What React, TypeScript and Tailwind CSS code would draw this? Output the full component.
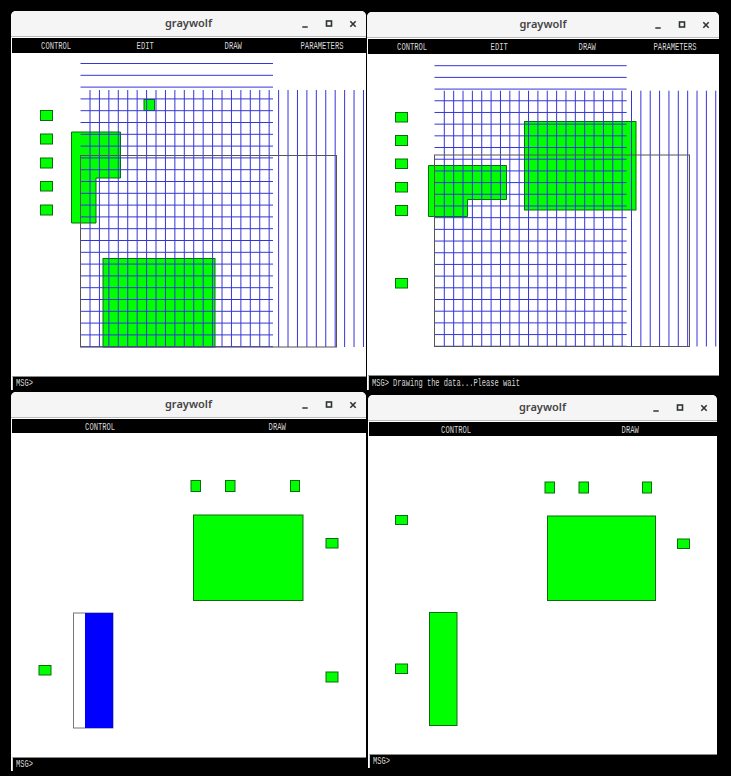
import React from "react";

const mono = "font-['Liberation_Mono',monospace]";

type Box = [number, number, number, number];

interface GridProps {
  x0: number;
  y0: number;
  dx: number;
  dy: number;
  rowLeft: number;
  rowRight: number;
  colTop: number;
  colBottom: number;
}

// green cells are drawn first, the routing grid goes over them
const Grid: React.FC<GridProps> = ({ x0, y0, dx, dy, rowLeft, rowRight, colTop, colBottom }) => (
  <g stroke="#3535d8" strokeWidth={1}>
    {Array.from({ length: 25 }, (_, i) => (
      <line key={`h${i}`} x1={rowLeft} x2={rowRight} y1={y0 + i * dy} y2={y0 + i * dy} />
    ))}
    {Array.from({ length: 30 }, (_, i) => (
      <line key={`v${i}`} x1={x0 + i * dx} x2={x0 + i * dx} y1={colTop} y2={colBottom} />
    ))}
  </g>
);

const Cells: React.FC<{ boxes: Box[] }> = ({ boxes }) => (
  <g fill="#00ff00" stroke="#0b6e0b" strokeWidth={1}>
    {boxes.map(([x1, y1, x2, y2], i) => (
      <rect key={i} x={x1} y={y1} width={x2 - x1} height={y2 - y1} />
    ))}
  </g>
);

const TitleButtons = () => (
  <div className="flex justify-end pr-px">
    <span className="flex h-6 w-6 items-center justify-center">
      <svg width="10" height="10" viewBox="0 0 10 10">
        <path d="M2.3 8h5.4" stroke="#2e3436" strokeWidth="1.6" />
      </svg>
    </span>
    <span className="flex h-6 w-6 items-center justify-center">
      <svg width="10" height="10" viewBox="0 0 10 10">
        <rect x="2.5" y="2" width="5" height="5" fill="none" stroke="#2e3436" strokeWidth="1.6" />
      </svg>
    </span>
    <span className="flex h-6 w-6 items-center justify-center">
      <svg width="10" height="10" viewBox="0 0 10 10">
        <path d="M2.3 2.3l5.4 5.4M7.7 2.3l-5.4 5.4" stroke="#2e3436" strokeWidth="1.6" />
      </svg>
    </span>
  </div>
);

interface WindowProps {
  className: string;
  menu: string[];
  menuClass: string;
  message?: string;
  msgClass: string;
  view: [number, number, number, number];
  children: React.ReactNode;
}

const GrayWindow: React.FC<WindowProps> = ({ className, menu, menuClass, message, msgClass, view, children }) => (
  <div className={`absolute flex flex-col overflow-hidden rounded-t-[5px] bg-white ${className}`}>
    <div className="grid h-[25px] shrink-0 grid-cols-[1fr_auto_1fr] items-center bg-[#f5f5f5]">
      <span />
      <span className="font-['Noto_Sans',sans-serif] text-[11px] font-semibold text-[#444444]">graywolf</span>
      <TitleButtons />
    </div>
    <div className="h-px shrink-0 bg-[#bbbbbb]" />
    <div className="h-px shrink-0 bg-white" />
    <div className={`ml-px grid shrink-0 bg-black text-[11px] text-[#d8d8d8] ${menuClass} ${mono}`}>
      {menu.map((item) => (
        <div key={item} className="flex items-center justify-center">
          <span className="inline-block scale-x-[0.65]">{item}</span>
        </div>
      ))}
    </div>
    <svg className="block shrink-0" width={view[2]} height={view[3]} viewBox={view.join(" ")}>
      {children}
    </svg>
    <div className={`ml-px flex shrink-0 items-center whitespace-nowrap border-t border-l border-t-[#8a8a8a] border-l-[#cfcfcf] bg-black pl-[3px] text-[11px] text-[#d8d8d8] ${msgClass} ${mono}`}>
      <span className="inline-block origin-left scale-x-[0.64]">{message ?? "MSG>"}</span>
    </div>
  </div>
);

export default function App() {
  return (
    <div className="relative h-[776px] w-[731px] overflow-hidden bg-black">
      {/* top left */}
      <GrayWindow
        className="left-[11px] top-[11px] w-[355px]"
        menu={["CONTROL", "EDIT", "DRAW", "PARAMETERS"]}
        menuClass="h-[15px] grid-cols-4"
        msgClass="h-[14px]"
        view={[11, 53, 355, 323]}
      >
        <polygon points="71.5,132 120.5,132 120.5,178 96,178 96,223 71.5,223" fill="#00ff00" stroke="#0b6e0b" />
        <Cells
          boxes={[
            [144, 99.5, 154.5, 110.5],
            [103, 258.5, 215, 347],
            [40.5, 110.5, 52.5, 120.5],
            [40.5, 134, 52.5, 144],
            [40.5, 158, 52.5, 168],
            [40.5, 181.5, 52.5, 191],
            [40.5, 205, 52.5, 215],
          ]}
        />
        <Grid x0={90} y0={63.5} dx={9.43} dy={11.8} rowLeft={80.5} rowRight={273} colTop={90} colBottom={347} />
        <rect x="80.5" y="155.5" width="256" height="191.5" fill="none" stroke="#555555" />
      </GrayWindow>

      {/* top right */}
      <GrayWindow
        className="left-[367px] top-[12px] w-[352px]"
        menu={["CONTROL", "EDIT", "DRAW", "PARAMETERS"]}
        menuClass="h-[15px] grid-cols-4"
        message="MSG> Drawing the data...Please wait"
        msgClass="h-[15px]"
        view={[367, 54, 352, 321]}
      >
        <polygon points="428.5,165.5 506.5,165.5 506.5,199.5 467.5,199.5 467.5,216.5 428.5,216.5" fill="#00ff00" stroke="#0b6e0b" />
        <Cells
          boxes={[
            [524.5, 121.5, 636, 210],
            [395.5, 112.5, 407.5, 122],
            [395.5, 135.5, 407.5, 145.5],
            [395.5, 159, 407.5, 168.5],
            [395.5, 182.5, 407.5, 192],
            [395.5, 205.5, 407.5, 215.5],
            [395.5, 278.5, 407.5, 288],
          ]}
        />
        <Grid x0={444.3} y0={65.7} dx={9.36} dy={11.69} rowLeft={434.5} rowRight={626.7} colTop={90.7} colBottom={346.5} />
        <rect x="434.5" y="155" width="255" height="191.5" fill="none" stroke="#555555" />
      </GrayWindow>

      {/* bottom left */}
      <GrayWindow
        className="left-[11px] top-[392px] w-[355px]"
        menu={["CONTROL", "DRAW"]}
        menuClass="h-[14px] grid-cols-2"
        msgClass="h-[14px]"
        view={[11, 433, 355, 324]}
      >
        <Cells
          boxes={[
            [191, 480.5, 200.5, 491.5],
            [225.5, 480.5, 235, 491.5],
            [290.5, 480.5, 299.5, 491.5],
            [326, 538.5, 338, 548],
            [193.5, 515, 303, 600.5],
            [39, 665.5, 51, 675],
            [326, 672, 338, 682],
          ]}
        />
        <rect x="73.5" y="613" width="39.5" height="115" fill="#fff" stroke="#777" />
        <rect x="85" y="613" width="28" height="115" fill="#0000ff" />
      </GrayWindow>

      {/* bottom right */}
      <GrayWindow
        className="left-[368px] top-[395px] w-[349px]"
        menu={["CONTROL", "DRAW"]}
        menuClass="h-[14px] grid-cols-2"
        msgClass="h-[14px]"
        view={[368, 436, 349, 318]}
      >
        <Cells
          boxes={[
            [545, 482, 554.5, 493],
            [579, 482, 588.5, 493],
            [642.5, 482, 651.5, 493],
            [395.5, 515.5, 407.5, 524.5],
            [547.5, 516, 655.5, 600.5],
            [677.5, 539, 689.5, 548.5],
            [395.5, 664, 407.5, 673.5],
            [429.5, 612.5, 457, 725.5],
          ]}
        />
      </GrayWindow>
    </div>
  );
}
